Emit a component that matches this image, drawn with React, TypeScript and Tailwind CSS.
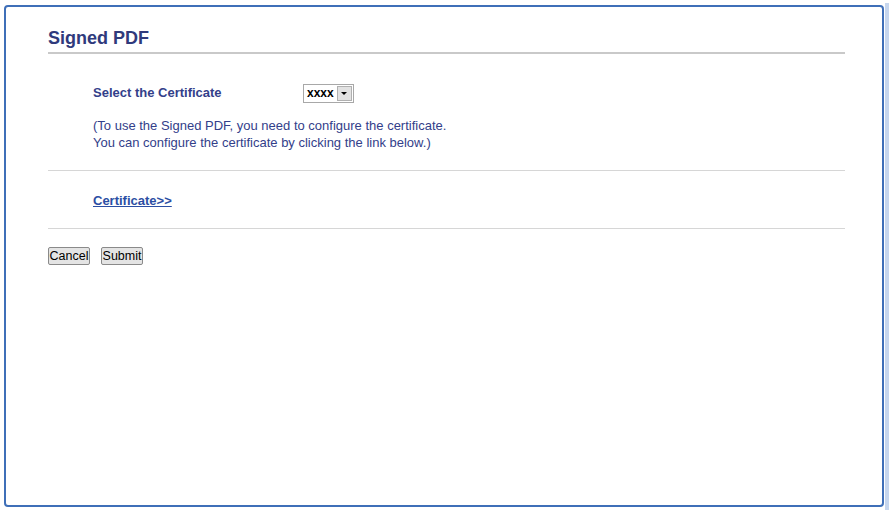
import React from 'react';

export default function App() {
  return (
    <div className="w-[889px] h-[510px] bg-white flex font-['Liberation_Sans',Arial,sans-serif]">
      <div className="mt-[5px] ml-[4px] w-[880px] h-[502px] border-2 border-[#3f6fb8] rounded-[4px] pl-[42px] pr-[37px] pt-[20px]">
        <h1 className="text-[18px] font-bold text-[#2f3a7c] leading-[22px] pb-[3px] border-b-2 border-[#c9c9c9]">
          Signed PDF
        </h1>

        <div className="pl-[45px] pt-[29px] pb-[19px] border-b border-[#d6d6d6] text-[#33408a]">
          <div className="flex items-center h-[20px]">
            <span className="w-[210px] text-[13px] font-bold">Select the Certificate</span>
            <div className="flex items-center h-[19px] border border-[#a8a8a8] bg-white">
              <span className="px-[3px] text-[12px] font-bold text-black leading-none">xxxx</span>
              <span className="w-[15px] h-[15px] mr-[1px] bg-[#e2e2e2] border border-[#b0b0b0] flex items-center justify-center">
                <span className="w-0 h-0 border-l-[3px] border-r-[3px] border-t-[3px] border-l-transparent border-r-transparent border-t-black" />
              </span>
            </div>
          </div>
          <p className="mt-[14px] text-[13px] leading-[17px]">
            (To use the Signed PDF, you need to configure the certificate.
            <br />
            You can configure the certificate by clicking the link below.)
          </p>
        </div>

        <div className="pl-[45px] pt-[17px] pb-[16px] border-b border-[#d6d6d6]">
          <a href="#" className="text-[13px] font-bold text-[#2b4ea3] underline leading-[17px]">
            Certificate&gt;&gt;
          </a>
        </div>

        <div className="flex gap-[11px] pt-[18px]">
          <button className="h-[18px] px-0 w-[42px] text-[12.5px] leading-none text-black bg-[#e4e4e4] border border-[#8a8a8a] rounded-[2px]">
            Cancel
          </button>
          <button className="h-[18px] px-0 w-[42px] text-[12.5px] leading-none text-black bg-[#e4e4e4] border border-[#8a8a8a] rounded-[2px]">
            Submit
          </button>
        </div>
      </div>
      <div className="mt-[3px] ml-[1px] w-[4px] h-[507px] bg-[#c6d6ee]" />
    </div>
  );
}
